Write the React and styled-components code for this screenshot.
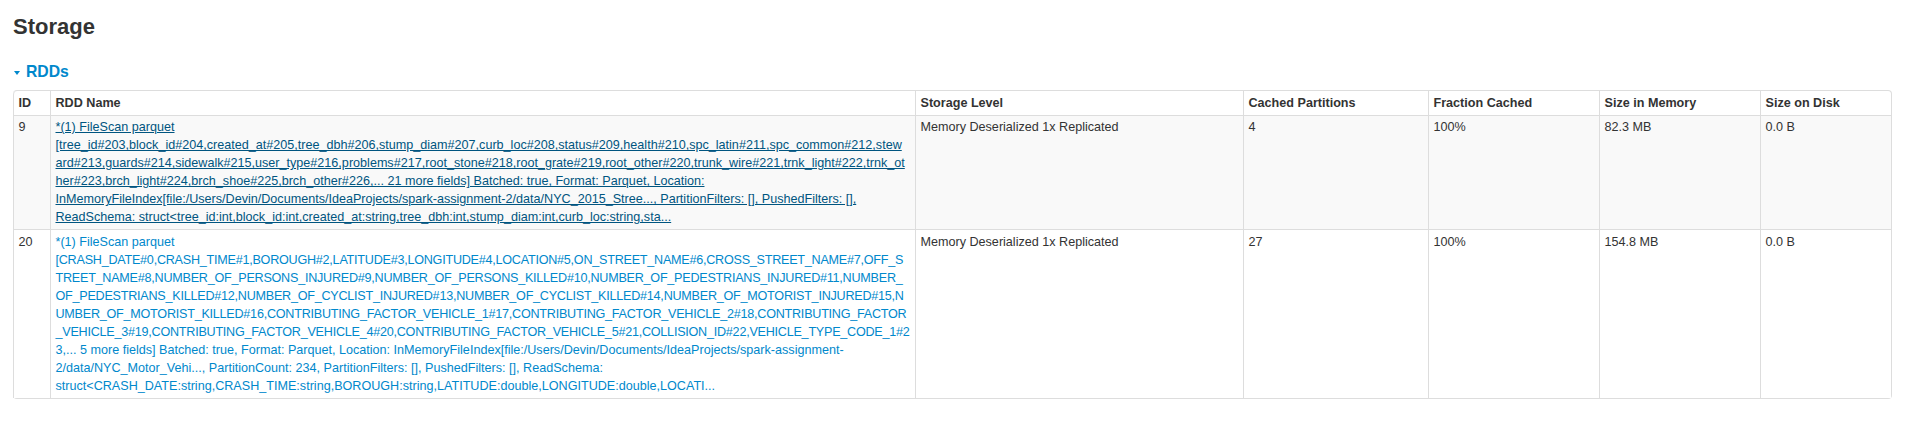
import React from "react";
import styled, { createGlobalStyle } from "styled-components";

const Global = createGlobalStyle`
  html, body { margin: 0; padding: 0; background: #fff; }
  body {
    font-family: "Liberation Sans", Helvetica, Arial, sans-serif;
    font-size: 12.6px;
    line-height: 18px;
    color: #333;
  }
`;

const Page = styled.div`
  padding: 9px 16px 0 13px;
`;

const Title = styled.h3`
  margin: 0;
  font-size: 22px;
  line-height: 36px;
  font-weight: bold;
  color: #333;
`;

const SectionHeader = styled.h4`
  margin: 18px 0 0;
  display: flex;
  align-items: center;
  gap: 6px;
  font-size: 15.75px;
  line-height: 18px;
  font-weight: bold;
  color: #0088cc;
  cursor: pointer;
`;

const Arrow = styled.span`
  display: inline-block;
  width: 0;
  height: 0;
  margin-left: 1px;
  margin-top: 1px;
  border-left: 3.5px solid transparent;
  border-right: 3.5px solid transparent;
  border-top: 4px solid #0088cc;
`;

const Table = styled.table`
  margin-top: 9px;
  width: 100%;
  table-layout: fixed;
  border-collapse: separate;
  border-spacing: 0;
  border: 1px solid #ddd;
  border-left: 0;
  border-radius: 4px;
`;

const Th = styled.th`
  box-sizing: border-box;
  width: ${(p) => (p.$w ? `${p.$w}px` : "auto")};
  padding: 3px 4.5px 2.7px;
  text-align: left;
  vertical-align: bottom;
  font-weight: bold;
  color: #333;
  border-left: 1px solid #ddd;
  &:first-child { border-top-left-radius: 4px; }
  &:last-child { border-top-right-radius: 4px; }
`;

const Td = styled.td`
  padding: 2.7px 4.5px 3px;
  vertical-align: top;
  text-align: left;
  border-left: 1px solid #ddd;
  border-top: 1px solid #ddd;
  background: ${(p) => (p.$striped ? "#f9f9f9" : "#fff")};
`;

const NameLink = styled.a`
  display: block;
  color: ${(p) => (p.$hover ? "#005580" : "#0088cc")};
  text-decoration: ${(p) => (p.$hover ? "underline" : "none")};
  cursor: pointer;
`;

const NameLine = styled.span`
  display: block;
  white-space: nowrap;
  letter-spacing: ${(p) => (p.$tight ? "-0.24px" : "normal")};
`;

const rdds = [
  {
    id: "9",
    hover: true,
    lines: [
      "*(1) FileScan parquet",
      "[tree_id#203,block_id#204,created_at#205,tree_dbh#206,stump_diam#207,curb_loc#208,status#209,health#210,spc_latin#211,spc_common#212,stew",
      "ard#213,guards#214,sidewalk#215,user_type#216,problems#217,root_stone#218,root_grate#219,root_other#220,trunk_wire#221,trnk_light#222,trnk_ot",
      "her#223,brch_light#224,brch_shoe#225,brch_other#226,... 21 more fields] Batched: true, Format: Parquet, Location:",
      "InMemoryFileIndex[file:/Users/Devin/Documents/IdeaProjects/spark-assignment-2/data/NYC_2015_Stree..., PartitionFilters: [], PushedFilters: [],",
      "ReadSchema: struct<tree_id:int,block_id:int,created_at:string,tree_dbh:int,stump_diam:int,curb_loc:string,sta...",
    ],
    level: "Memory Deserialized 1x Replicated",
    partitions: "4",
    fraction: "100%",
    memory: "82.3 MB",
    disk: "0.0 B",
  },
  {
    id: "20",
    hover: false,
    lines: [
      "*(1) FileScan parquet",
      "[CRASH_DATE#0,CRASH_TIME#1,BOROUGH#2,LATITUDE#3,LONGITUDE#4,LOCATION#5,ON_STREET_NAME#6,CROSS_STREET_NAME#7,OFF_S",
      "TREET_NAME#8,NUMBER_OF_PERSONS_INJURED#9,NUMBER_OF_PERSONS_KILLED#10,NUMBER_OF_PEDESTRIANS_INJURED#11,NUMBER_",
      "OF_PEDESTRIANS_KILLED#12,NUMBER_OF_CYCLIST_INJURED#13,NUMBER_OF_CYCLIST_KILLED#14,NUMBER_OF_MOTORIST_INJURED#15,N",
      "UMBER_OF_MOTORIST_KILLED#16,CONTRIBUTING_FACTOR_VEHICLE_1#17,CONTRIBUTING_FACTOR_VEHICLE_2#18,CONTRIBUTING_FACTOR",
      "_VEHICLE_3#19,CONTRIBUTING_FACTOR_VEHICLE_4#20,CONTRIBUTING_FACTOR_VEHICLE_5#21,COLLISION_ID#22,VEHICLE_TYPE_CODE_1#2",
      "3,... 5 more fields] Batched: true, Format: Parquet, Location: InMemoryFileIndex[file:/Users/Devin/Documents/IdeaProjects/spark-assignment-",
      "2/data/NYC_Motor_Vehi..., PartitionCount: 234, PartitionFilters: [], PushedFilters: [], ReadSchema:",
      "struct<CRASH_DATE:string,CRASH_TIME:string,BOROUGH:string,LATITUDE:double,LONGITUDE:double,LOCATI...",
    ],
    tightLines: 5,
    level: "Memory Deserialized 1x Replicated",
    partitions: "27",
    fraction: "100%",
    memory: "154.8 MB",
    disk: "0.0 B",
  },
];

const columns = [
  { label: "ID", w: 37 },
  { label: "RDD Name", w: 865 },
  { label: "Storage Level", w: 328 },
  { label: "Cached Partitions", w: 185 },
  { label: "Fraction Cached", w: 171 },
  { label: "Size in Memory", w: 161 },
  { label: "Size on Disk" },
];

export default function App() {
  return (
    <>
      <Global />
      <Page>
        <Title>Storage</Title>
        <SectionHeader>
          <Arrow />
          RDDs
        </SectionHeader>
        <Table>
          <thead>
            <tr>
              {columns.map((c) => (
                <Th key={c.label} $w={c.w}>
                  {c.label}
                </Th>
              ))}
            </tr>
          </thead>
          <tbody>
            {rdds.map((r, i) => {
              const striped = i % 2 === 0;
              return (
                <tr key={r.id}>
                  <Td $striped={striped}>{r.id}</Td>
                  <Td $striped={striped}>
                    <NameLink $hover={r.hover}>
                      {r.lines.map((l, j) => (
                        <NameLine
                          key={j}
                          $tight={r.tightLines && j >= 1 && j <= r.tightLines}
                        >
                          {l}
                        </NameLine>
                      ))}
                    </NameLink>
                  </Td>
                  <Td $striped={striped}>{r.level}</Td>
                  <Td $striped={striped}>{r.partitions}</Td>
                  <Td $striped={striped}>{r.fraction}</Td>
                  <Td $striped={striped}>{r.memory}</Td>
                  <Td $striped={striped}>{r.disk}</Td>
                </tr>
              );
            })}
          </tbody>
        </Table>
      </Page>
    </>
  );
}
